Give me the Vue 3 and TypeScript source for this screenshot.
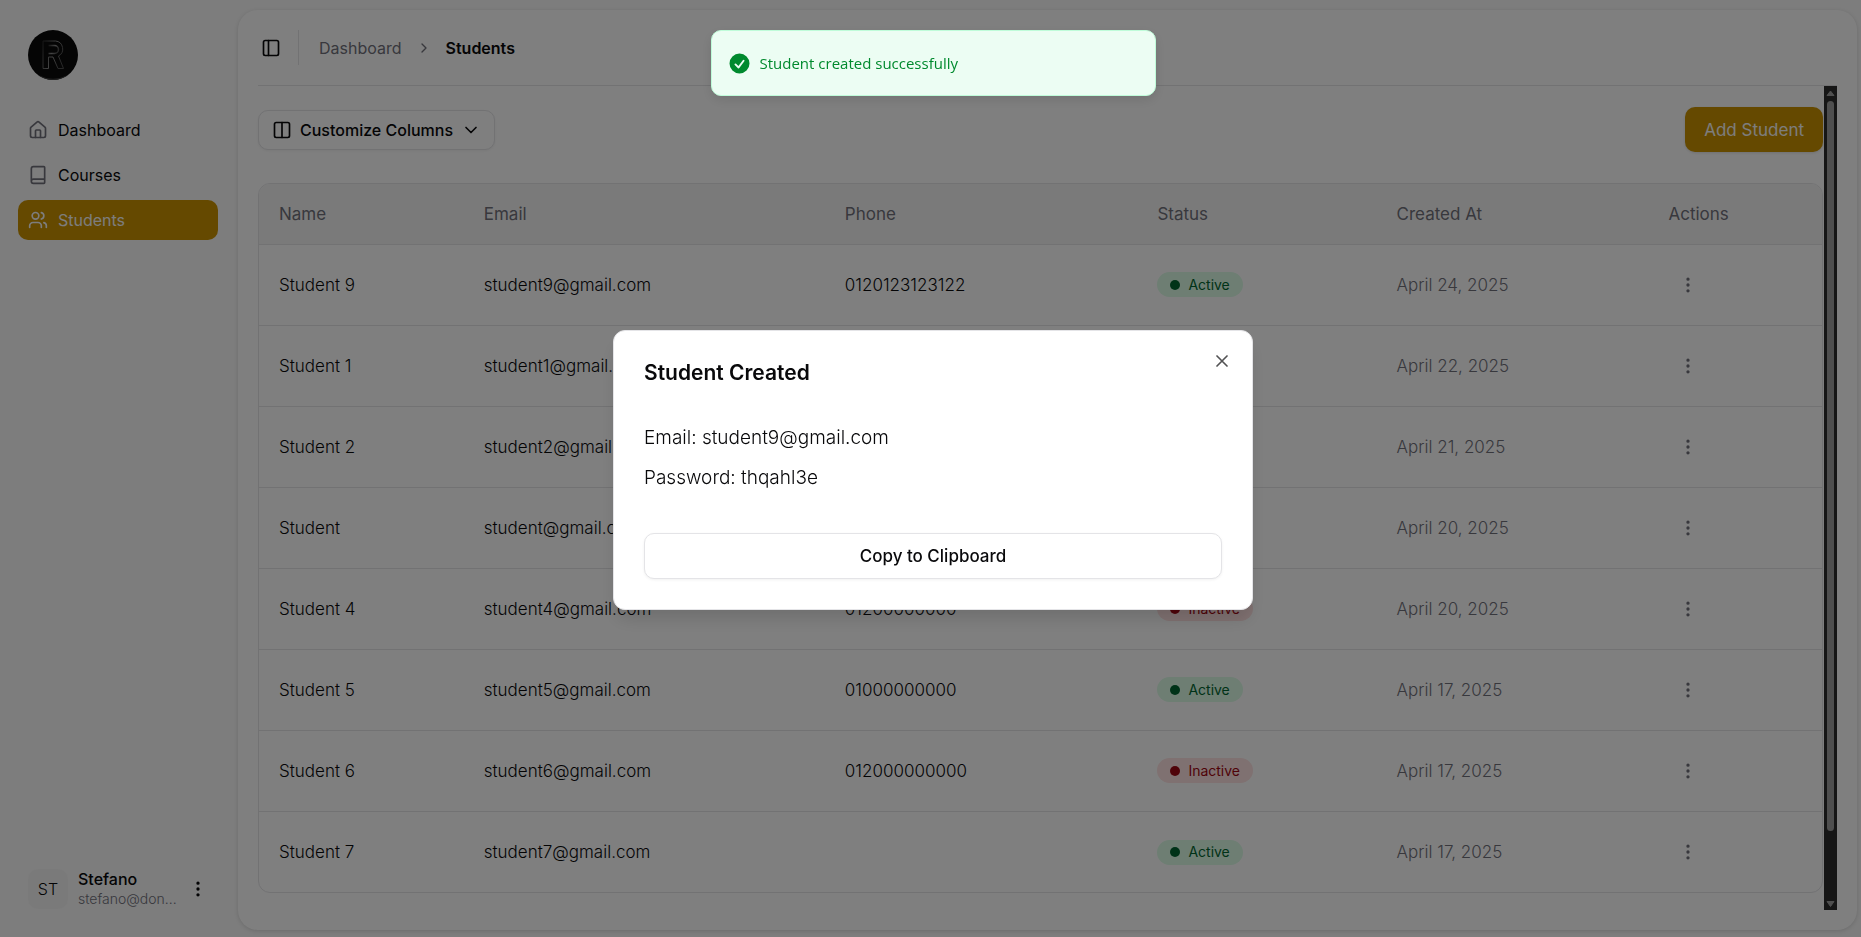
<script setup lang="ts">
import { ref } from 'vue'

interface Student {
  name: string
  email: string
  phone: string
  active: boolean
  createdAt: string
}

const students: Student[] = [
  { name: 'Student 9', email: 'student9@gmail.com', phone: '0120123123122', active: true, createdAt: 'April 24, 2025' },
  { name: 'Student 1', email: 'student1@gmail.com', phone: '01200000000', active: true, createdAt: 'April 22, 2025' },
  { name: 'Student 2', email: 'student2@gmail.com', phone: '01200000000', active: true, createdAt: 'April 21, 2025' },
  { name: 'Student', email: 'student@gmail.com', phone: '01200000000', active: true, createdAt: 'April 20, 2025' },
  { name: 'Student 4', email: 'student4@gmail.com', phone: '01200000000', active: false, createdAt: 'April 20, 2025' },
  { name: 'Student 5', email: 'student5@gmail.com', phone: '01000000000', active: true, createdAt: 'April 17, 2025' },
  { name: 'Student 6', email: 'student6@gmail.com', phone: '012000000000', active: false, createdAt: 'April 17, 2025' },
  { name: 'Student 7', email: 'student7@gmail.com', phone: '', active: true, createdAt: 'April 17, 2025' },
]

const columns = ['Name', 'Email', 'Phone', 'Status', 'Created At', 'Actions']

const dialogOpen = ref(true)
const created = { email: 'student9@gmail.com', password: 'thqahl3e' }

function copyCredentials(): void {
  void navigator.clipboard?.writeText(`Email: ${created.email}\nPassword: ${created.password}`)
}
</script>

<template>
  <div class="shell">
    <aside class="sidebar">
      <svg class="logo" viewBox="0 0 50 50" role="img" aria-label="R logo">
        <defs>
          <linearGradient id="rim" x1="0" y1="0" x2="1" y2="0.4">
            <stop offset="0" stop-color="#2c2c2c" />
            <stop offset="0.6" stop-color="#8a8a8a" />
            <stop offset="1" stop-color="#505050" />
          </linearGradient>
        </defs>
        <circle cx="25" cy="25" r="25" fill="#0a0a0a" />
        <path d="M10 45a25 25 0 0 0 30 0a34 34 0 0 1-30 0z" fill="#3c3c3c" />
        <g fill="none" stroke="url(#rim)" stroke-width="1">
          <path d="M15 11h12.500a8 8 0 0 1 3 15l5 12.500h-5.500l-5-11.500h-4.500v11.500h-5.500z" />
          <path d="M20.500 15.500h6a4 4 0 0 1 0 8h-6" stroke-width="1.500" />
        </g>
      </svg>
      <nav class="menu" aria-label="Main">
        <a class="item" href="#dashboard">
          <svg class="icon" viewBox="0 0 24 24"><path d="M15 21v-8a1 1 0 0 0-1-1h-4a1 1 0 0 0-1 1v8" /><path d="M3 10a2 2 0 0 1 .709-1.528l7-5.999a2 2 0 0 1 2.582 0l7 5.999A2 2 0 0 1 21 10v9a2 2 0 0 1-2 2H5a2 2 0 0 1-2-2z" /></svg>
          <span>Dashboard</span>
        </a>
        <a class="item" href="#courses">
          <svg class="icon" viewBox="0 0 24 24"><path d="M4 19.500v-15A2.500 2.500 0 0 1 6.500 2H19a1 1 0 0 1 1 1v18a1 1 0 0 1-1 1H6.500a1 1 0 0 1 0-5H20" /></svg>
          <span>Courses</span>
        </a>
        <a class="item current" href="#students" aria-current="page">
          <svg class="icon" viewBox="0 0 24 24"><path d="M16 21v-2a4 4 0 0 0-4-4H6a4 4 0 0 0-4 4v2" /><circle cx="9" cy="7" r="4" /><path d="M22 21v-2a4 4 0 0 0-3-3.870M16 3.130a4 4 0 0 1 0 7.750" /></svg>
          <span>Students</span>
        </a>
      </nav>
      <div class="user">
        <span class="avatar">ST</span>
        <div class="who">
          <span class="who-name">Stefano</span>
          <span class="who-mail">stefano@don...</span>
        </div>
        <button class="bare" type="button" aria-label="Account menu">
          <svg class="icon dots" viewBox="0 0 24 24"><circle cx="12" cy="12" r="1" /><circle cx="12" cy="5" r="1" /><circle cx="12" cy="19" r="1" /></svg>
        </button>
      </div>
    </aside>

    <main class="panel">
      <header class="topbar">
        <button class="bare" type="button" aria-label="Toggle sidebar">
          <svg class="icon" viewBox="0 0 24 24"><rect x="3" y="3" width="18" height="18" rx="2" /><path d="M9 3v18" /></svg>
        </button>
        <span class="rule"></span>
        <nav class="crumbs" aria-label="Breadcrumb">
          <a href="#dashboard">Dashboard</a>
          <svg class="icon chevron" viewBox="0 0 24 24"><path d="m9 18 6-6-6-6" /></svg>
          <span class="here">Students</span>
        </nav>
      </header>

      <div class="scroller">
        <div class="content">
          <div class="toolbar">
            <button class="outline" type="button">
              <svg class="icon" viewBox="0 0 24 24"><rect x="3" y="3" width="18" height="18" rx="2" /><path d="M12 3v18" /></svg>
              <span>Customize Columns</span>
              <svg class="icon" viewBox="0 0 24 24"><path d="m6 9 6 6 6-6" /></svg>
            </button>
            <button class="primary" type="button">Add Student</button>
          </div>

          <div class="table-box">
            <table>
              <colgroup>
                <col class="c-name" /><col class="c-email" /><col class="c-phone" />
                <col class="c-status" /><col class="c-created" /><col class="c-actions" />
              </colgroup>
              <thead>
                <tr><th v-for="c in columns" :key="c" scope="col">{{ c }}</th></tr>
              </thead>
              <tbody>
                <tr v-for="s in students" :key="s.email">
                  <td>{{ s.name }}</td>
                  <td>{{ s.email }}</td>
                  <td>{{ s.phone }}</td>
                  <td>
                    <span class="badge" :class="{ off: !s.active }"><i></i>{{ s.active ? 'Active' : 'Inactive' }}</span>
                  </td>
                  <td class="muted">{{ s.createdAt }}</td>
                  <td class="muted">
                    <button class="bare row-menu" type="button" :aria-label="`Actions for ${s.name}`">
                      <svg class="icon dots" viewBox="0 0 24 24"><circle cx="12" cy="12" r="1" /><circle cx="12" cy="5" r="1" /><circle cx="12" cy="19" r="1" /></svg>
                    </button>
                  </td>
                </tr>
              </tbody>
            </table>
          </div>
        </div>
        <div class="scrollbar" aria-hidden="true">
          <svg class="arrow" viewBox="0 0 13 15"><path d="M6.500 5l3.500 4.500H3z" /></svg>
          <div class="track"><div class="thumb"></div></div>
          <svg class="arrow" viewBox="0 0 13 15"><path d="M6.500 11.500L3 6.500h7z" /></svg>
        </div>
      </div>
    </main>
  </div>

  <div v-if="dialogOpen" class="overlay">
    <section class="dialog" role="dialog" aria-modal="true" aria-labelledby="dialog-title">
      <h2 id="dialog-title">Student Created</h2>
      <div class="creds">
        <p>Email: {{ created.email }}</p>
        <p>Password: {{ created.password }}</p>
      </div>
      <button class="outline copy" type="button" @click="copyCredentials">Copy to Clipboard</button>
      <button class="bare close" type="button" aria-label="Close" @click="dialogOpen = false">
        <svg class="icon" viewBox="0 0 24 24"><path d="M18 6 6 18M6 6l12 12" /></svg>
      </button>
    </section>
  </div>

  <div class="toast-area">
    <div class="toast" role="status">
      <svg viewBox="0 0 20 20"><path fill-rule="evenodd" d="M10 18a8 8 0 1 0 0-16 8 8 0 0 0 0 16zm3.857-9.809a.75.75 0 0 0-1.214-.882l-3.483 4.790-1.880-1.880a.75.75 0 1 0-1.060 1.061l2.500 2.500a.75.75 0 0 0 1.137-.089l4-5.500z" clip-rule="evenodd" /></svg>
      <span>Student created successfully</span>
    </div>
  </div>
</template>

<style>
body {
  margin: 0;
  background: #fafafa;
}
</style>

<style scoped>
.shell {
  display: flex;
  box-sizing: border-box;
  min-height: 100vh;
  padding: 10px 4px 7px 0;
  background: #fafafa;
  color: #09090b;
  font: 400 16px/24px "Inter", sans-serif;
}

button {
  font: inherit;
  color: inherit;
  cursor: pointer;
}

a {
  color: inherit;
  text-decoration: none;
}

.icon {
  flex: none;
  width: 20px;
  height: 20px;
  fill: none;
  stroke: currentColor;
  stroke-width: 2;
  stroke-linecap: round;
  stroke-linejoin: round;
}

.dots {
  fill: currentColor;
}

.bare {
  display: flex;
  padding: 0;
  border: 0;
  background: none;
}

.sidebar {
  display: flex;
  flex: none;
  flex-direction: column;
  box-sizing: border-box;
  width: 238px;
  padding: 20px 20px 20px 18px;
}

.logo {
  width: 50px;
  height: 50px;
  margin-left: 10px;
}

.menu {
  display: flex;
  flex-direction: column;
  gap: 5px;
  margin-top: 30px;
}

.item {
  display: flex;
  align-items: center;
  gap: 10px;
  height: 40px;
  padding: 0 10px;
  border-radius: 10px;
}

.item .icon {
  color: #71717b;
}

.item.current,
.item.current .icon {
  color: #fafafa;
}

.item.current {
  background: #ca9200;
}

.user {
  display: flex;
  align-items: center;
  margin-top: auto;
  padding: 0 10px;
}

.avatar {
  display: grid;
  place-items: center;
  width: 40px;
  height: 40px;
  margin-right: 10px;
  border-radius: 10px;
  background: #f5f5f5;
  font-weight: 300;
}

.who {
  display: flex;
  flex: 1;
  flex-direction: column;
  padding-bottom: 2px;
}

.who-name {
  font-weight: 500;
  line-height: 22px;
}

.who-mail {
  color: #71717b;
  font-size: 14px;
  font-weight: 300;
  line-height: 18px;
}

.panel {
  display: flex;
  flex: 1;
  flex-direction: column;
  min-width: 0;
  box-sizing: border-box;
  padding: 0 20px;
  border-radius: 20px;
  background: #fff;
  box-shadow: 0 1px 4px rgba(0, 0, 0, 0.14);
}

.topbar {
  display: flex;
  flex: none;
  align-items: center;
  box-sizing: border-box;
  height: 76px;
  padding-left: 3px;
  border-bottom: 1px solid #e4e4e7;
}

.rule {
  width: 1px;
  height: 35px;
  margin: 0 20px 0 17px;
  background: #e4e4e7;
}

.crumbs {
  display: flex;
  align-items: center;
  gap: 14px;
  color: #71717b;
}

.chevron {
  width: 16px;
  height: 16px;
}

.here {
  color: #09090b;
  font-weight: 600;
}

.scroller {
  display: flex;
  flex: 1;
  gap: 1px;
  margin-bottom: 20px;
}

.content {
  flex: 1;
  min-width: 0;
  padding: 21px 0 10px;
}

.toolbar {
  display: flex;
  align-items: center;
  justify-content: space-between;
  margin-bottom: 31px;
}

.outline {
  display: flex;
  align-items: center;
  justify-content: center;
  gap: 8px;
  box-sizing: border-box;
  height: 40px;
  padding: 0 13px;
  border: 1px solid #e4e4e7;
  border-radius: 10px;
  background: #fff;
  box-shadow: 0 1px 3px rgba(0, 0, 0, 0.06);
  font-weight: 500;
}

.primary {
  height: 45px;
  padding: 0 19px;
  border: 0;
  border-radius: 10px;
  background: #ca9200;
  box-shadow: 0 1px 3px rgba(0, 0, 0, 0.12);
  color: #fafafa;
  font-size: 17px;
  font-weight: 400;
}

.table-box {
  border: 1px solid #e4e4e7;
  border-radius: 12px;
  overflow: hidden;
}

table {
  width: 100%;
  border-collapse: collapse;
  table-layout: fixed;
}

.c-name {
  width: 13.1%;
}

.c-email {
  width: 23.1%;
}

.c-phone {
  width: 20%;
}

.c-status {
  width: 15.3%;
}

.c-created {
  width: 17.4%;
}

th,
td {
  box-sizing: border-box;
  padding: 0 20px;
  font-size: 17px;
  text-align: left;
}

th {
  height: 60px;
  background: #f5f5f5;
  color: #71717b;
  font-weight: 400;
}

td {
  height: 81px;
  border-top: 1px solid #e4e4e7;
  font-weight: 300;
}

.muted {
  color: #71717b;
}

.badge {
  display: inline-flex;
  align-items: center;
  gap: 8px;
  height: 25px;
  padding: 0 13px;
  border-radius: 13px;
  background: #dcfce7;
  color: #016630;
  font-size: 14px;
  font-weight: 400;
  vertical-align: middle;
}

.badge i {
  width: 10px;
  height: 10px;
  border-radius: 50%;
  background: currentColor;
}

.badge.off {
  background: #ffe2e2;
  color: #9f0712;
}

.row-menu {
  margin-left: 10px;
}

.scrollbar {
  display: flex;
  flex: none;
  flex-direction: column;
  width: 13px;
  background: #2c2c2c;
}

.arrow {
  width: 13px;
  height: 15px;
  fill: #9f9f9f;
  stroke: #9f9f9f;
  stroke-linejoin: round;
}

.track {
  flex: 1;
  padding: 0 3px;
}

.thumb {
  height: 92%;
  border-radius: 4px;
  background: #9f9f9f;
}

.overlay {
  display: grid;
  place-items: center;
  position: fixed;
  inset: 0;
  padding: 3px 0 0 5px;
  background: rgba(0, 0, 0, 0.5);
  color: #09090b;
  font: 400 16px/24px "Inter", sans-serif;
}

.dialog {
  position: relative;
  box-sizing: border-box;
  width: min(640px, 90%);
  padding: 30px;
  border: 1px solid #e4e4e7;
  border-radius: 12px;
  background: #fff;
  box-shadow: 0 12px 18px -4px rgba(0, 0, 0, 0.14);
}

h2 {
  margin: 0;
  font-size: 21px;
  font-weight: 600;
  line-height: 24px;
}

.creds {
  display: flex;
  flex-direction: column;
  gap: 10px;
  margin: 38px 0 40px;
}

.creds p {
  margin: 0;
  font-size: 19px;
  font-weight: 300;
  line-height: 30px;
}

.copy {
  width: 100%;
  height: 46px;
  font-size: 17px;
}

.close {
  position: absolute;
  top: 20px;
  right: 20px;
  opacity: 0.7;
}

.toast-area {
  display: flex;
  justify-content: center;
  position: fixed;
  inset: 30px 0 auto;
  padding-left: 5px;
}

.toast {
  display: flex;
  align-items: center;
  gap: 8px;
  box-sizing: border-box;
  width: 445px;
  height: 66px;
  padding: 0 15px;
  border: 1px solid #bffcd9;
  border-radius: 10px;
  background: #ecfdf3;
  box-shadow: 0 4px 12px rgba(0, 0, 0, 0.1);
  color: #008a2e;
  font: 400 15px/24px "Open Sans", "Noto Sans", sans-serif;
}

.toast svg {
  width: 25px;
  height: 25px;
  fill: currentColor;
}
</style>
